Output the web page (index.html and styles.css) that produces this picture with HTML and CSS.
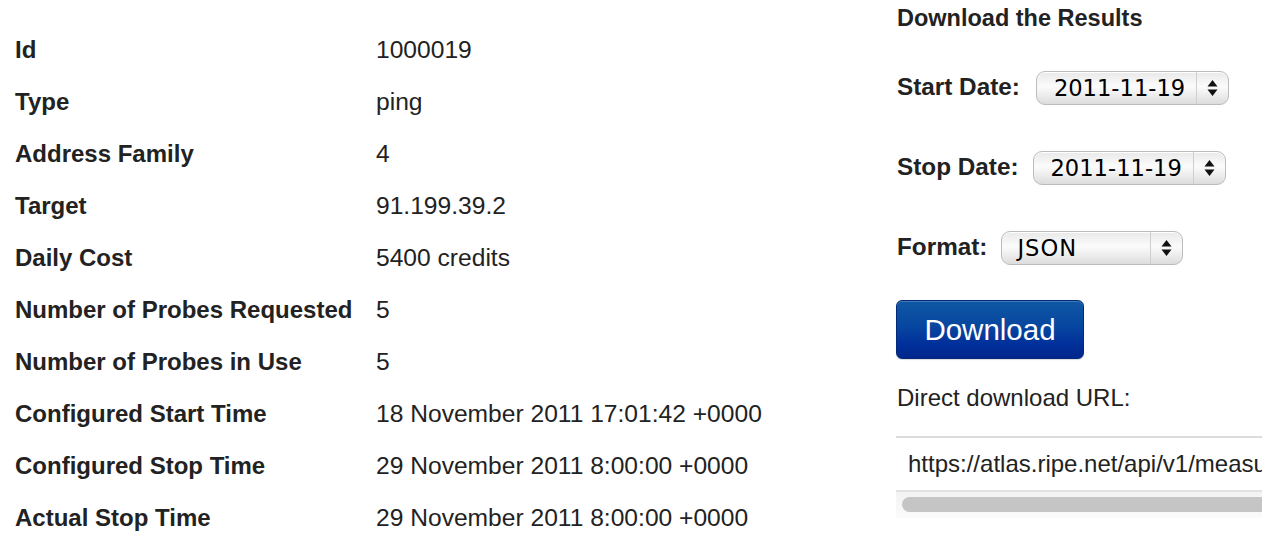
FILE: index.html
```html
<!DOCTYPE html>
<html>
<head>
<meta charset="utf-8">
<title>Measurement 1000019</title>
<link rel="stylesheet" href="styles.css">
</head>
<body>
<div class="page">
  <div class="details">
    <table class="info">
      <tr><th>Id</th><td>1000019</td></tr>
      <tr><th>Type</th><td>ping</td></tr>
      <tr><th>Address Family</th><td>4</td></tr>
      <tr><th>Target</th><td>91.199.39.2</td></tr>
      <tr><th>Daily Cost</th><td>5400 credits</td></tr>
      <tr><th>Number of Probes Requested</th><td>5</td></tr>
      <tr><th>Number of Probes in Use</th><td>5</td></tr>
      <tr><th>Configured Start Time</th><td>18 November 2011 17:01:42 +0000</td></tr>
      <tr><th>Configured Stop Time</th><td>29 November 2011 8:00:00 +0000</td></tr>
      <tr><th>Actual Stop Time</th><td>29 November 2011 8:00:00 +0000</td></tr>
    </table>
  </div>
  <div class="download">
    <h2 class="title">Download the Results</h2>
    <div class="field">
      <span class="label">Start Date:</span>
      <div class="select sel-date"><span class="sel-text">2011-11-19</span><span class="sel-arrow"><svg width="11" height="18" viewBox="0 0 11 18"><path d="M5.5 1 L10.5 7.5 H0.5 Z M5.5 17 L10.5 10.5 H0.5 Z" fill="#111"/></svg></span></div>
    </div>
    <div class="field gap-tight">
      <span class="label">Stop Date:</span>
      <div class="select sel-date"><span class="sel-text">2011-11-19</span><span class="sel-arrow"><svg width="11" height="18" viewBox="0 0 11 18"><path d="M5.5 1 L10.5 7.5 H0.5 Z M5.5 17 L10.5 10.5 H0.5 Z" fill="#111"/></svg></span></div>
    </div>
    <div class="field gap-tight">
      <span class="label">Format:</span>
      <div class="select sel-format"><span class="sel-text">JSON</span><span class="sel-arrow"><svg width="11" height="18" viewBox="0 0 11 18"><path d="M5.5 1 L10.5 7.5 H0.5 Z M5.5 17 L10.5 10.5 H0.5 Z" fill="#111"/></svg></span></div>
    </div>
    <button class="btn">Download</button>
    <p class="direct">Direct download URL:</p>
    <div class="urlbox">
      <div class="url">https://atlas.ripe.net/api/v1/measurement/1000019/result/?start=1321660800&amp;stop=1321747199&amp;format=json</div>
      <div class="scrollbar"><div class="thumb"></div></div>
    </div>
  </div>
</div>
</body>
</html>
```

FILE: styles.css
```css
html, body {
  margin: 0;
  padding: 0;
  background: #fff;
  overflow: hidden;
}
body {
  font-family: "Liberation Sans", Arial, Helvetica, sans-serif;
  color: #222;
  width: 1262px;
  height: 554px;
}
.page {
  display: flex;
  align-items: flex-start;
}
.details {
  width: 881px;
  padding-left: 15px;
  padding-top: 24px;
  box-sizing: border-box;
  flex: none;
}
.info {
  border-collapse: collapse;
}
.info th,
.info td {
  height: 52px;
  padding: 0;
  text-align: left;
  vertical-align: middle;
  white-space: nowrap;
}
.info th {
  font-size: 24px;
  font-weight: bold;
  width: 361px;
}
.info td {
  font-size: 24.6px;
  font-weight: normal;
}
.download {
  flex: none;
  width: 420px;
  padding-left: 16px;
  box-sizing: border-box;
}
.title {
  margin: 0;
  padding-top: 4px;
  font-size: 23.5px;
  line-height: 28px;
  font-weight: bold;
}
.field {
  display: flex;
  align-items: center;
  gap: 16px;
  height: 34px;
  margin-top: 46px;
}
.title + .field {
  margin-top: 39px;
}
.gap-tight {
  gap: 14px;
}
.label {
  font-size: 24.3px;
  font-weight: bold;
  position: relative;
  top: -1px;
}
.select {
  display: flex;
  align-items: stretch;
  height: 34px;
  box-sizing: border-box;
  border: 1px solid #bcbcbc;
  border-radius: 9px;
  background: linear-gradient(#e9e9e9 0%, #fbfbfb 45%, #f4f4f4 60%, #dcdcdc 100%);
  box-shadow: inset 0 1px 0 #fff;
  font-family: "DejaVu Sans", "Lucida Grande", sans-serif;
  font-size: 22.6px;
  color: #000;
}
.sel-date { width: 193px; }
.sel-format { width: 182px; }
.sel-text {
  flex: 1;
  display: flex;
  align-items: center;
  padding-left: 17px;
  border-right: 1px solid #cfcfcf;
}
.sel-format .sel-text {
  padding-left: 15px;
  letter-spacing: 1px;
}
.sel-arrow {
  width: 31px;
  display: flex;
  align-items: center;
  justify-content: center;
  flex: none;
}
.btn {
  display: block;
  margin-top: 35px;
  margin-left: -1px;
  width: 188px;
  height: 59px;
  border: 1px solid #032a78;
  border-radius: 6px;
  background: linear-gradient(#0f58a3 0%, #0746a0 45%, #01309a 75%, #00278d 100%);
  box-shadow: inset 0 1px 0 rgba(255,255,255,0.2), 0 1px 1px rgba(0,0,0,0.15);
  color: #fff;
  font-family: "Liberation Sans", Arial, sans-serif;
  font-size: 29.5px;
  padding: 0;
  text-align: center;
}
.direct {
  margin: 25px 0 0 0;
  font-size: 24px;
  line-height: 28px;
}
.urlbox {
  margin-top: 24px;
  margin-left: -1px;
  width: 405px;
  border-top: 2px solid #dcdcdc;
  overflow: hidden;
}
.url {
  height: 52px;
  line-height: 52px;
  padding-left: 12px;
  font-size: 24px;
  white-space: nowrap;
  overflow: hidden;
  color: #222;
}
.scrollbar {
  height: 28px;
  box-sizing: border-box;
  border-top: 2px solid #e2e2e2;
  background: linear-gradient(#f3f3f3, #fbfbfb);
  padding: 5px 0 0 6px;
}
.thumb {
  height: 15px;
  width: 100%;
  border-radius: 8px;
  background: #c5c5c5;
}
```
